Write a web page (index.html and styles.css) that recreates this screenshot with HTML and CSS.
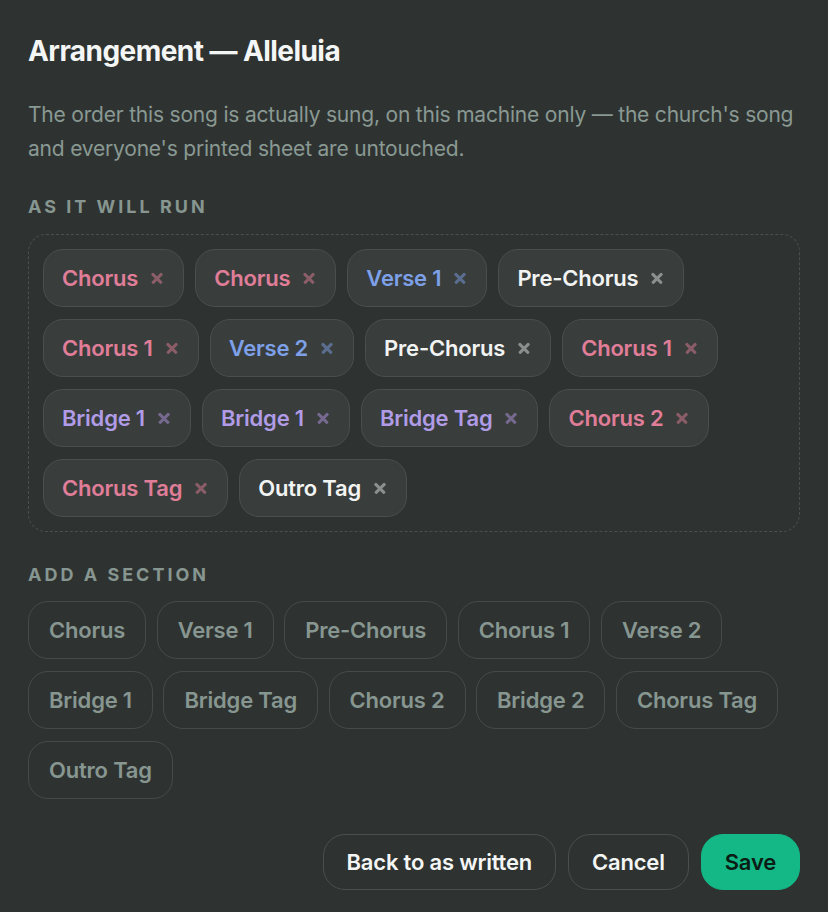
FILE: index.html
```html
<!DOCTYPE html>
<html lang="en">
<head>
    <meta charset="UTF-8">
    <meta name="viewport" content="width=device-width, initial-scale=1.0">
    <title>Arrangement — Alleluia</title>
    <link rel="stylesheet" href="styles.css">
</head>
<body>
    <div class="dialog">
        <h1 class="title">Arrangement — Alleluia</h1>
        <p class="desc">The order this song is actually sung, on this machine only — the church's song and everyone's printed sheet are untouched.</p>

        <div class="label">As it will run</div>
        <div class="run-box">
            <div class="chip chorus">Chorus <span class="x"></span></div>
            <div class="chip chorus">Chorus <span class="x"></span></div>
            <div class="chip verse">Verse 1 <span class="x"></span></div>
            <div class="chip plain">Pre-Chorus <span class="x"></span></div>
            <div class="chip chorus">Chorus 1 <span class="x"></span></div>
            <div class="chip verse">Verse 2 <span class="x"></span></div>
            <div class="chip plain">Pre-Chorus <span class="x"></span></div>
            <div class="chip chorus">Chorus 1 <span class="x"></span></div>
            <div class="chip bridge">Bridge 1 <span class="x"></span></div>
            <div class="chip bridge">Bridge 1 <span class="x"></span></div>
            <div class="chip bridge">Bridge Tag <span class="x"></span></div>
            <div class="chip chorus">Chorus 2 <span class="x"></span></div>
            <div class="chip chorus">Chorus Tag <span class="x"></span></div>
            <div class="chip plain">Outro Tag <span class="x"></span></div>
        </div>

        <div class="label label-add">Add a section</div>
        <div class="add-list">
            <div class="add">Chorus</div>
            <div class="add">Verse 1</div>
            <div class="add">Pre-Chorus</div>
            <div class="add">Chorus 1</div>
            <div class="add">Verse 2</div>
            <div class="add">Bridge 1</div>
            <div class="add">Bridge Tag</div>
            <div class="add">Chorus 2</div>
            <div class="add">Bridge 2</div>
            <div class="add">Chorus Tag</div>
            <div class="add">Outro Tag</div>
        </div>

        <div class="actions">
            <div class="btn">Back to as written</div>
            <div class="btn">Cancel</div>
            <div class="btn save">Save</div>
        </div>
    </div>
</body>
</html>
```

FILE: styles.css
```css
body {
    margin: 0;
    background-color: #2e3331;
    font-family: Inter, "Noto Sans", sans-serif;
}

.dialog {
    padding: 34px 28px 0;
}

.title {
    margin: 0;
    font-size: 28px;
    line-height: 34px;
    font-weight: 700;
    color: #f4f6f5;
    letter-spacing: -0.02em;
}

.desc {
    margin: 30px -4px 0 0;
    font-size: 21px;
    line-height: 34px;
    letter-spacing: -0.2px;
    color: #8a9993;
}

.label {
    margin-top: 30px;
    font-size: 18px;
    line-height: 22px;
    font-weight: 700;
    letter-spacing: 3px;
    text-transform: uppercase;
    color: #879690;
}

.label-add {
    margin-top: 32px;
}

.run-box {
    margin-top: 16px;
    border: 1px dashed #4a504e;
    border-radius: 18px;
    padding: 14px;
    display: flex;
    flex-wrap: wrap;
    gap: 12px 11px;
}

.chip {
    display: flex;
    align-items: center;
    height: 58px;
    box-sizing: border-box;
    padding: 0 20px 0 18px;
    border: 1px solid #4a4f4d;
    border-radius: 20px;
    background-color: #393d3b;
    font-size: 22px;
    font-weight: 600;
    letter-spacing: -0.2px;
}

.x {
    width: 12px;
    height: 12px;
    margin-left: 13px;
    position: relative;
}

.x::before,
.x::after {
    content: "";
    position: absolute;
    left: -1px;
    top: 4.75px;
    width: 14px;
    height: 2.5px;
    border-radius: 1px;
    background-color: currentColor;
    transform: rotate(45deg);
}

.x::after {
    transform: rotate(-45deg);
}

.chorus { color: #e07d99; }
.chorus .x { color: #8a5d69; }
.verse { color: #7da0e8; }
.verse .x { color: #5b6e90; }
.bridge { color: #b09be6; }
.bridge .x { color: #76698f; }
.plain { color: #f2f4f3; }
.plain .x { color: #8b8f8d; }

.add-list {
    margin-top: 15px;
    display: flex;
    flex-wrap: wrap;
    gap: 12px 10.5px;
}

.add {
    display: flex;
    align-items: center;
    height: 58px;
    box-sizing: border-box;
    padding: 0 20px;
    border: 1px solid #454b49;
    border-radius: 20px;
    font-size: 22px;
    font-weight: 600;
    letter-spacing: -0.2px;
    color: #879690;
}

.actions {
    margin-top: 35px;
    display: flex;
    justify-content: flex-end;
    gap: 12px;
}

.btn {
    display: flex;
    align-items: center;
    height: 56px;
    box-sizing: border-box;
    padding: 0 23px;
    border: 1px solid #4a4f4d;
    border-radius: 22px;
    font-size: 22px;
    font-weight: 600;
    letter-spacing: -0.2px;
    color: #f4f6f5;
}

.save {
    background-color: #13b886;
    border-color: #13b886;
    color: #0b1c15;
}
```
